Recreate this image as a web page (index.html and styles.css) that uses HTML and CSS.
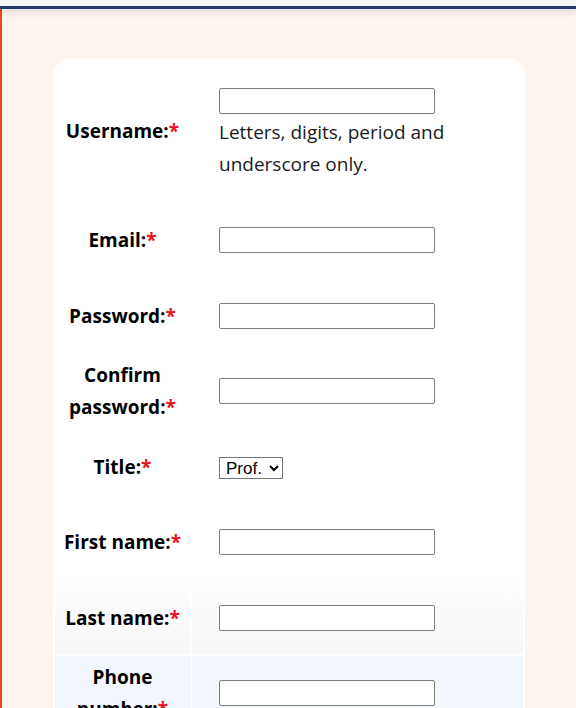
FILE: index.html
```html
<!DOCTYPE html>
<html lang="en">
<head>
<meta charset="utf-8">
<title>Register</title>
<link rel="stylesheet" href="styles.css">
</head>
<body>
<header class="topbar"></header>
<main class="page">
  <div class="card">
    <table class="form-table">
      <tr class="row row-tall">
        <th class="label">Username:<span class="req">*</span></th>
        <td class="field field-top">
          <input class="text-input" type="text">
          <div class="hint">Letters, digits, period and underscore only.</div>
        </td>
      </tr>
      <tr class="row">
        <th class="label">Email:<span class="req">*</span></th>
        <td class="field"><input class="text-input" type="email"></td>
      </tr>
      <tr class="row row-short">
        <th class="label">Password:<span class="req">*</span></th>
        <td class="field"><input class="text-input" type="password"></td>
      </tr>
      <tr class="row">
        <th class="label">Confirm password:<span class="req">*</span></th>
        <td class="field"><input class="text-input" type="password"></td>
      </tr>
      <tr class="row row-short">
        <th class="label">Title:<span class="req">*</span></th>
        <td class="field">
          <select class="select-input">
            <option>Prof.</option>
            <option>Dr.</option>
            <option>Mr.</option>
            <option>Ms.</option>
          </select>
        </td>
      </tr>
      <tr class="row">
        <th class="label">First name:<span class="req">*</span></th>
        <td class="field"><input class="text-input" type="text"></td>
      </tr>
      <tr class="row row-short row-fade">
        <th class="label">Last name:<span class="req">*</span></th>
        <td class="field"><input class="text-input" type="text"></td>
      </tr>
      <tr class="row row-hover">
        <th class="label">Phone number:<span class="req">*</span></th>
        <td class="field"><input class="text-input" type="tel"></td>
      </tr>
      <tr class="row row-short">
        <th class="label">Organization:<span class="req">*</span></th>
        <td class="field"><input class="text-input" type="text"></td>
      </tr>
    </table>
  </div>
</main>
</body>
</html>
```
FILE: styles.css
```css
html, body {
  margin: 0;
  padding: 0;
}

body {
  font-family: "Open Sans", "Noto Sans", sans-serif;
  font-size: 19px;
  line-height: 32px;
  color: #111;
  background: #fff5f0;
}

.topbar {
  height: 6px;
  background: #f4f5fa;
  border-bottom: 3px solid #233a6c;
  box-shadow: 0 2px 8px rgba(35, 58, 108, 0.18);
  position: relative;
  z-index: 1;
}

.page {
  border-left: 2px solid #e8491d;
  background: #fff5f0;
  padding: 50px 51px 40px 51px;
}

.card {
  background: #ffffff;
  border-radius: 16px;
  overflow: hidden;
}

.form-table {
  width: 100%;
  table-layout: fixed;
  border-collapse: separate;
  border-spacing: 2px;
}

.row {
  height: 74px;
}

.row-short {
  height: 73px;
}

.row-tall {
  height: 140px;
}

.label {
  box-sizing: border-box;
  width: 135px;
  padding: 0 2px;
  text-align: center;
  vertical-align: middle;
  font-weight: 700;
  color: #000;
}

.req {
  color: #e8141b;
}

.field {
  padding: 0 8px 0 27px;
  vertical-align: middle;
}

.field-top {
  vertical-align: top;
  padding-top: 27px;
}

.text-input {
  display: block;
  box-sizing: border-box;
  width: 216px;
  height: 26px;
  margin: 0;
  border: 1px solid #7d7d7d;
  border-radius: 2px;
  background: #fff;
}

.hint {
  max-width: 250px;
  margin-top: 2px;
  color: #1a1a1a;
}

.select-input {
  box-sizing: border-box;
  width: 64px;
  height: 22px;
  font-family: "Liberation Sans", Arial, sans-serif;
  font-size: 17px;
  padding: 0 0 0 2px;
  border: 1px solid #767676;
  border-radius: 0;
  background: #fff;
  color: #000;
}

.row-fade .label,
.row-fade .field {
  background: linear-gradient(#ffffff 0%, #fbfbfb 40%, #f8f8f8 100%);
}

.row-hover .label,
.row-hover .field {
  background: #f2f6fd;
}
```
